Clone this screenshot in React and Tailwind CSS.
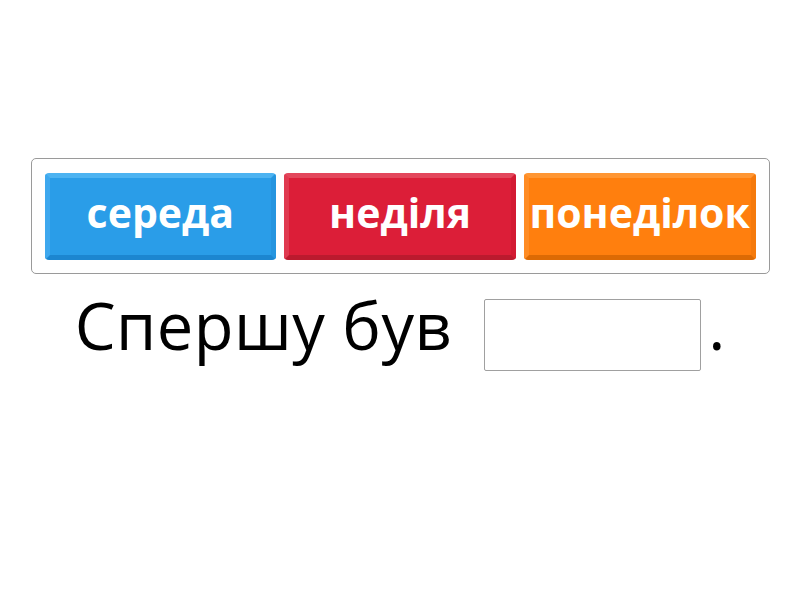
const words = [
  {
    label: 'середа',
    className: 'bg-[#2a9de8] border-t-[#4db3f1] border-l-[#3ea8ee] border-r-[#2595df] border-b-[#1c86d0]',
  },
  {
    label: 'неділя',
    className: 'bg-[#dc1e38] border-t-[#e3475c] border-l-[#e03a50] border-r-[#d31a33] border-b-[#bb1a2e]',
  },
  {
    label: 'понеділок',
    className: 'bg-[#ff7f0e] border-t-[#ff9633] border-l-[#ff8c24] border-r-[#f57a0c] border-b-[#dc6a04]',
  },
];

const App = () => {
  return (
    <div className="w-[800px] h-[600px] bg-white flex flex-col items-center pt-[158px]" style={{ fontFamily: '"Open Sans", sans-serif' }}>
      <div className="w-[739px] h-[116px] border border-[#9a9a9a] rounded-[5px] flex gap-[8px] px-[13px] pt-[14px]">
        {words.map(w => (
          <div
            key={w.label}
            className={`w-[232px] h-[87px] rounded-[4px] border-[5px] flex items-center justify-center text-white font-bold text-[41px] leading-none pb-[8px] whitespace-nowrap ${w.className}`}
          >
            {w.label}
          </div>
        ))}
      </div>
      <div className="flex items-center mt-[19px] text-black">
        <span className="text-[65px] leading-none tracking-[0.4px] pb-[19px]">Спершу був</span>
        <div className="w-[217px] h-[72px] border border-[#a0a0a0] rounded-[2px] ml-[32px]"></div>
        <span className="text-[65px] leading-none ml-[7px] pb-[19px]">.</span>
      </div>
    </div>
  );
};

export default App;
